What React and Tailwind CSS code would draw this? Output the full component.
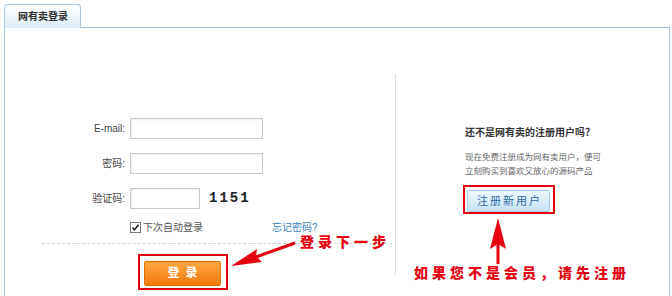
import React from "react";

const font = { fontFamily: '"Liberation Sans", "Noto Sans CJK SC", sans-serif' };

const Field = ({ label, width = "w-[133px]", children }) => (
  <div className="flex items-center h-[21px]">
    <span className="w-[121px] text-right text-[10px] text-[#444] pr-[1px]">{label}</span>
    <input className={`ml-[4px] h-[21px] ${width} border border-[#c9c9c9] shadow-[inset_1px_1px_2px_rgba(0,0,0,0.08)] outline-none`} />
    {children}
  </div>
);

const Annotations = () => (
  <svg className="absolute inset-0 pointer-events-none" width="672" height="296">
    {/* arrow to login button */}
    <line x1="295" y1="243" x2="256" y2="257" stroke="#e60012" strokeWidth="3" />
    <polygon points="231,266 262,262 256,256 257,249" fill="#e60012" />
    {/* arrow to register button */}
    <line x1="498" y1="242" x2="498" y2="264" stroke="#e60012" strokeWidth="3" />
    <polygon points="498,218 506,249 498,244 490,249" fill="#e60012" />
  </svg>
);

export default function App() {
  return (
    <div className="relative w-[672px] h-[296px] bg-white overflow-hidden flex flex-col pl-1 pr-[2px] pt-1" style={font}>
      {/* tab */}
      <div className="flex">
        <div className="w-[77px] h-[24px] border border-b-0 border-[#a6c9e2] rounded-t-[4px] bg-gradient-to-b from-white to-[#dcebf8] flex items-center pl-[13px]">
          <span className="text-[10px] font-bold text-[#333]">网有卖登录</span>
        </div>
        <div className="flex-1 h-[24px] border-b border-[#a6c9e2]" />
      </div>

      {/* panel */}
      <div className="flex-1 flex border-x border-[#a6c9e2]">
        {/* login form */}
        <div className="w-[390px] pt-[90px] flex flex-col">
          <Field label="E-mail:" />
          <div className="h-[14px]" />
          <Field label="密码:" />
          <div className="h-[14px]" />
          <Field label="验证码:" width="w-[70px]">
            <span className="ml-[9px] text-[14px] font-bold tracking-[2px] text-[#222]" style={{ fontFamily: '"Liberation Mono", monospace' }}>
              1151
            </span>
          </Field>

          <div className="mt-[12px] h-[13px] flex items-center pl-[125px]">
            <span className="w-[11px] h-[11px] border border-[#777] bg-white flex items-center justify-center">
              <svg width="9" height="9" viewBox="0 0 9 9">
                <path d="M1.5 4.5 L3.5 6.8 L7.5 1.8" fill="none" stroke="#222" strokeWidth="1.6" />
              </svg>
            </span>
            <span className="ml-[2px] text-[10px] text-[#555]">下次自动登录</span>
            <a className="ml-[69px] text-[10px] text-[#3a7fc1]">忘记密码?</a>
          </div>

          <div className="mt-[9px] ml-[37px] w-[350px] border-t border-dashed border-[#d4d4d4]" />

          <div className="mt-[10px] ml-[133px] w-[90px] h-[36px] border-2 border-[#e60012] pt-[4px] pl-[4px]">
            <button className="w-[77px] h-[25px] rounded-[2px] border border-[#e27100] bg-gradient-to-b from-[#ffa640] to-[#f27a00] text-white text-[12px] font-bold tracking-[6px] pl-[6px]">
              登录
            </button>
          </div>
        </div>

        {/* register */}
        <div className="flex-1 flex">
          <div className="mt-[47px] h-[200px] border-l border-dotted border-[#c8c8c8]" />
          <div className="pl-[69px] pt-[98px] flex flex-col">
            <div className="text-[10px] font-bold text-[#333] leading-[14px]">还不是网有卖的注册用户吗？</div>
            <div className="mt-[10px] text-[8.5px] leading-[14px] text-[#666]">
              现在免费注册成为网有卖用户，便可
              <br />
              立刻购买到喜欢又放心的源码产品
            </div>
            <div className="mt-[7px] -ml-[2px] w-[92px] h-[29px] border-2 border-[#e60012] pt-[1px] pl-[2px]">
              <button className="w-[83px] h-[22px] rounded-[2px] border border-[#a3c9e8] bg-gradient-to-b from-[#f0f8fe] to-[#c6e2f6] text-[#2e6aa5] text-[11px] tracking-[2px] pl-[2px]">
                注册新用户
              </button>
            </div>
          </div>
        </div>
      </div>

      <Annotations />
      <span className="absolute left-[300px] top-[233px] text-[14px] font-black tracking-[4px] text-[#e60012] leading-[18px]">
        登录下一步
      </span>
      <span className="absolute left-[414px] top-[264px] text-[14px] font-black tracking-[4px] text-[#e60012] leading-[18px]">
        如果您不是会员，请先注册
      </span>
    </div>
  );
}
